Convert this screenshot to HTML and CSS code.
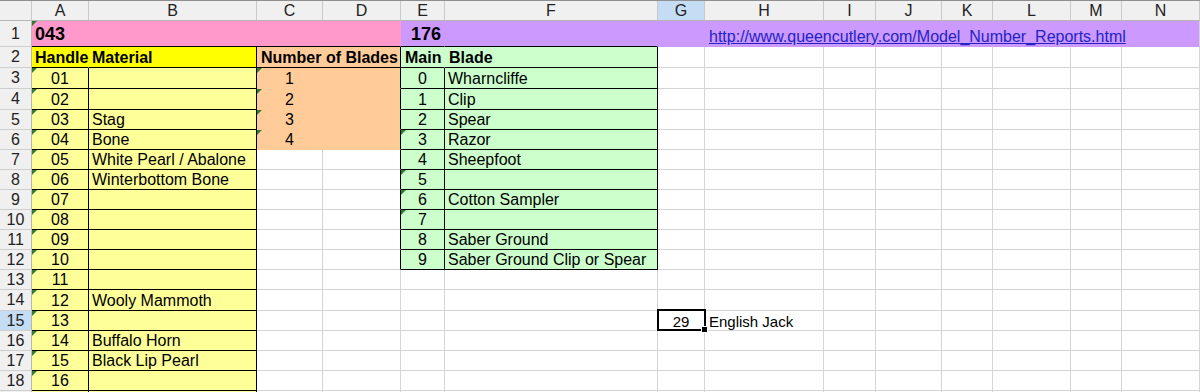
FILE: index.html
```html
<!DOCTYPE html>
<html lang="en">
<head>
  <meta charset="UTF-8" />
  <title>Queen Cutlery Model Numbers</title>
  <link rel="stylesheet" href="styles.css">
</head>
<body>

<div class="sheet">
  <!-- column headers -->
  <div class="ch"></div><div class="ch">A</div><div class="ch">B</div><div class="ch">C</div><div class="ch">D</div><div class="ch">E</div><div class="ch">F</div><div class="ch sel">G</div><div class="ch">H</div><div class="ch">I</div><div class="ch">J</div><div class="ch">K</div><div class="ch">L</div><div class="ch">M</div><div class="ch">N</div>

  <!-- row 1 -->
  <div class="rh">1</div>
  <div class="c pnk s4 b big tri nr kb">043</div>
  <div class="c pur b big rt nr kb">176</div>
  <div class="c pur nr kb"></div>
  <div class="c pur nr nb"></div>
  <div class="c pur s7 nb"><a class="link" href="#">http://www.queencutlery.com/Model_Number_Reports.html</a></div>

  <!-- row 2 -->
  <div class="rh">2</div>
  <div class="c hdl b nr kb">Handle</div>
  <div class="c hdl b kr kb">Material</div>
  <div class="c org b s2 kr kb">Number of Blades</div>
  <div class="c grn b nr kb">Main</div>
  <div class="c grn b kr kb">Blade</div>
  <div class="c"></div><div class="c"></div><div class="c"></div><div class="c"></div><div class="c"></div><div class="c"></div><div class="c"></div><div class="c"></div>

  <!-- row 3 -->
  <div class="rh">3</div>
  <div class="c mat ctr tri kr kb">01</div><div class="c mat kr kb"></div>
  <div class="c org ctr tri nr nb">1</div><div class="c org kr nb"></div>
  <div class="c grn ctr kr kb">0</div><div class="c grn kr kb">Wharncliffe</div>
  <div class="c"></div><div class="c"></div><div class="c"></div><div class="c"></div><div class="c"></div><div class="c"></div><div class="c"></div><div class="c"></div>

  <!-- row 4 -->
  <div class="rh">4</div>
  <div class="c mat ctr tri kr kb">02</div><div class="c mat kr kb"></div>
  <div class="c org ctr tri nr nb">2</div><div class="c org kr nb"></div>
  <div class="c grn ctr kr kb">1</div><div class="c grn kr kb">Clip</div>
  <div class="c"></div><div class="c"></div><div class="c"></div><div class="c"></div><div class="c"></div><div class="c"></div><div class="c"></div><div class="c"></div>

  <!-- row 5 -->
  <div class="rh">5</div>
  <div class="c mat ctr tri kr kb">03</div><div class="c mat kr kb">Stag</div>
  <div class="c org ctr tri nr nb">3</div><div class="c org kr nb"></div>
  <div class="c grn ctr kr kb">2</div><div class="c grn kr kb">Spear</div>
  <div class="c"></div><div class="c"></div><div class="c"></div><div class="c"></div><div class="c"></div><div class="c"></div><div class="c"></div><div class="c"></div>

  <!-- row 6 -->
  <div class="rh">6</div>
  <div class="c mat ctr tri kr kb">04</div><div class="c mat kr kb">Bone</div>
  <div class="c org ctr tri nr nb">4</div><div class="c org kr nb"></div>
  <div class="c grn ctr tri kr kb">3</div><div class="c grn kr kb">Razor</div>
  <div class="c"></div><div class="c"></div><div class="c"></div><div class="c"></div><div class="c"></div><div class="c"></div><div class="c"></div><div class="c"></div>

  <!-- row 7 -->
  <div class="rh">7</div>
  <div class="c mat ctr tri kr kb">05</div><div class="c mat kr kb">White Pearl / Abalone</div>
  <div class="c"></div><div class="c kr"></div>
  <div class="c grn ctr kr kb">4</div><div class="c grn kr kb">Sheepfoot</div>
  <div class="c"></div><div class="c"></div><div class="c"></div><div class="c"></div><div class="c"></div><div class="c"></div><div class="c"></div><div class="c"></div>

  <!-- row 8 -->
  <div class="rh">8</div>
  <div class="c mat ctr tri kr kb">06</div><div class="c mat kr kb">Winterbottom Bone</div>
  <div class="c"></div><div class="c kr"></div>
  <div class="c grn ctr tri kr kb">5</div><div class="c grn kr kb"></div>
  <div class="c"></div><div class="c"></div><div class="c"></div><div class="c"></div><div class="c"></div><div class="c"></div><div class="c"></div><div class="c"></div>

  <!-- row 9 -->
  <div class="rh">9</div>
  <div class="c mat ctr tri kr kb">07</div><div class="c mat kr kb"></div>
  <div class="c"></div><div class="c kr"></div>
  <div class="c grn ctr tri kr kb">6</div><div class="c grn kr kb">Cotton Sampler</div>
  <div class="c"></div><div class="c"></div><div class="c"></div><div class="c"></div><div class="c"></div><div class="c"></div><div class="c"></div><div class="c"></div>

  <!-- row 10 -->
  <div class="rh">10</div>
  <div class="c mat ctr tri kr kb">08</div><div class="c mat kr kb"></div>
  <div class="c"></div><div class="c kr"></div>
  <div class="c grn ctr tri kr kb">7</div><div class="c grn kr kb"></div>
  <div class="c"></div><div class="c"></div><div class="c"></div><div class="c"></div><div class="c"></div><div class="c"></div><div class="c"></div><div class="c"></div>

  <!-- row 11 -->
  <div class="rh">11</div>
  <div class="c mat ctr tri kr kb">09</div><div class="c mat kr kb"></div>
  <div class="c"></div><div class="c kr"></div>
  <div class="c grn ctr kr kb">8</div><div class="c grn kr kb">Saber Ground</div>
  <div class="c"></div><div class="c"></div><div class="c"></div><div class="c"></div><div class="c"></div><div class="c"></div><div class="c"></div><div class="c"></div>

  <!-- row 12 -->
  <div class="rh">12</div>
  <div class="c mat ctr tri kr kb">10</div><div class="c mat kr kb"></div>
  <div class="c"></div><div class="c kr"></div>
  <div class="c grn ctr kr kb">9</div><div class="c grn kr kb">Saber Ground Clip or Spear</div>
  <div class="c"></div><div class="c"></div><div class="c"></div><div class="c"></div><div class="c"></div><div class="c"></div><div class="c"></div><div class="c"></div>

  <!-- row 13 -->
  <div class="rh">13</div>
  <div class="c mat ctr tri kr kb">11</div><div class="c mat kr kb"></div>
  <div class="c"></div><div class="c"></div><div class="c"></div><div class="c"></div>
  <div class="c"></div><div class="c"></div><div class="c"></div><div class="c"></div><div class="c"></div><div class="c"></div><div class="c"></div><div class="c"></div>

  <!-- row 14 -->
  <div class="rh">14</div>
  <div class="c mat ctr tri kr kb">12</div><div class="c mat kr kb">Wooly Mammoth</div>
  <div class="c"></div><div class="c"></div><div class="c"></div><div class="c"></div>
  <div class="c"></div><div class="c"></div><div class="c"></div><div class="c"></div><div class="c"></div><div class="c"></div><div class="c"></div><div class="c"></div>

  <!-- row 15 -->
  <div class="rh sel">15</div>
  <div class="c mat ctr tri kr kb">13</div><div class="c mat kr kb"></div>
  <div class="c"></div><div class="c"></div><div class="c"></div><div class="c"></div>
  <div class="c ctr sm cur">29<span class="handle"></span></div>
  <div class="c sm note">English Jack</div>
  <div class="c"></div><div class="c"></div><div class="c"></div><div class="c"></div><div class="c"></div><div class="c"></div>

  <!-- row 16 -->
  <div class="rh">16</div>
  <div class="c mat ctr tri kr kb">14</div><div class="c mat kr kb">Buffalo Horn</div>
  <div class="c"></div><div class="c"></div><div class="c"></div><div class="c"></div>
  <div class="c"></div><div class="c"></div><div class="c"></div><div class="c"></div><div class="c"></div><div class="c"></div><div class="c"></div><div class="c"></div>

  <!-- row 17 -->
  <div class="rh">17</div>
  <div class="c mat ctr tri kr kb">15</div><div class="c mat kr kb">Black Lip Pearl</div>
  <div class="c"></div><div class="c"></div><div class="c"></div><div class="c"></div>
  <div class="c"></div><div class="c"></div><div class="c"></div><div class="c"></div><div class="c"></div><div class="c"></div><div class="c"></div><div class="c"></div>

  <!-- row 18 -->
  <div class="rh">18</div>
  <div class="c mat ctr tri kr kb">16</div><div class="c mat kr kb"></div>
  <div class="c"></div><div class="c"></div><div class="c"></div><div class="c"></div>
  <div class="c"></div><div class="c"></div><div class="c"></div><div class="c"></div><div class="c"></div><div class="c"></div><div class="c"></div><div class="c"></div>

  <!-- row 19, only its top edge shows -->
  <div class="rh"></div>
  <div class="c mat kr kb"></div><div class="c mat kr kb"></div>
  <div class="c"></div><div class="c"></div><div class="c"></div><div class="c"></div>
  <div class="c"></div><div class="c"></div><div class="c"></div><div class="c"></div><div class="c"></div><div class="c"></div><div class="c"></div><div class="c"></div>
</div>

</body>
</html>
```

FILE: styles.css
```css
body {
  margin: 0;
  height: 392px;
  overflow: hidden;
  background: #fff;
  font-family: "Liberation Sans", Arial, sans-serif;
  color: #000;
}

.sheet {
  display: grid;
  grid-template-columns: 32px 57px 168px 66px 78px 44px 213px 47px 119px 52px 66px 51px 78px 51px 78px;
  grid-template-rows: 20px 26px 21px 21px 21px 20px 20px 20px 20px 20px 20px 20px 20px 20px 21px 20px 20px 20px 20px 20px;
  border-top: 1px solid #8f8f8f;
}

/* headers */
.ch, .rh {
  display: flex;
  align-items: center;
  justify-content: center;
  background: #f0f0f0;
  color: #222;
  font-size: 16px;
  box-sizing: border-box;
}

.ch {
  border-right: 1px solid #c9c9c9;
  border-bottom: 1px solid #b5b5b5;
}

.rh {
  border-right: 1px solid #b5b5b5;
  border-bottom: 1px solid #cfcfcf;
}

.ch.sel, .rh.sel {
  background: #c5dcf5;
}

/* cells */
.c {
  position: relative;
  display: flex;
  align-items: flex-end;
  box-sizing: border-box;
  padding: 0 3px;
  font-size: 16px;
  white-space: nowrap;
  border-right: 1px solid #d4d4d4;
  border-bottom: 1px solid #d4d4d4;
}

.ctr { justify-content: center; }
.rt { justify-content: flex-end; }
.b { font-weight: bold; }
.big { font-size: 18px; padding-bottom: 1px; }
.sm { font-size: 15px; }

.s2 { grid-column: span 2; }
.s4 { grid-column: span 4; }
.s7 { grid-column: span 7; }

.kr { border-right-color: #000; }
.kb { border-bottom-color: #000; }
.nr { border-right-color: transparent; }
.nb { border-bottom-color: transparent; }

.pnk { background: #ff99cc; }
.pur { background: #cc99ff; }
.hdl { background: #ffff00; }
.mat { background: #ffff99; }
.org { background: #ffcc99; }
.grn { background: #ccffcc; }

.org.b { padding-left: 4px; }
.grn.b { padding-left: 4px; }

/* little green "number stored as text" flags */
.tri::before {
  content: "";
  position: absolute;
  left: 0;
  top: 0;
  border-top: 5px solid #2e7d32;
  border-right: 5px solid transparent;
}

.link {
  color: #2323c8;
  text-decoration: underline;
  padding-left: 1px;
}

.note { padding-left: 4px; }

/* active cell */
.cur::after {
  content: "";
  position: absolute;
  left: -1px;
  top: -2px;
  right: -2px;
  bottom: -1px;
  border: 2px solid #000;
  pointer-events: none;
}

.handle {
  position: absolute;
  right: -4px;
  bottom: -3px;
  width: 5px;
  height: 5px;
  background: #000;
  border: 1px solid #fff;
  z-index: 2;
}
```
